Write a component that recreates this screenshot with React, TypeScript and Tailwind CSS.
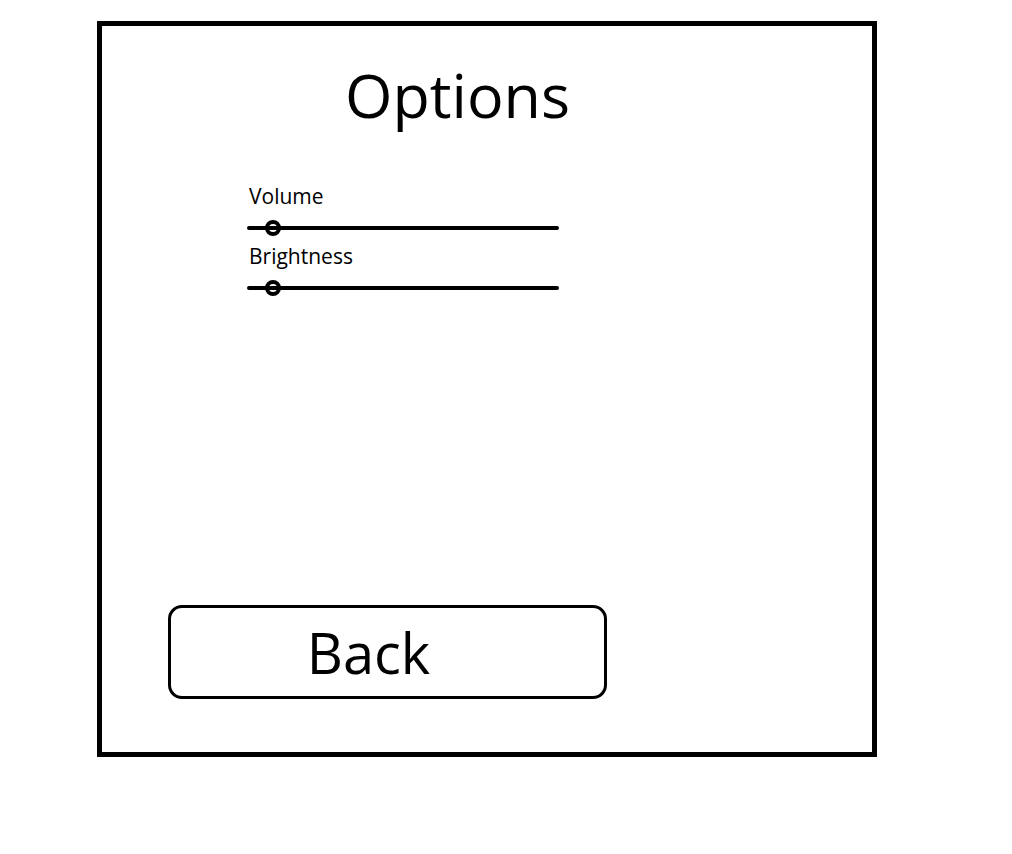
import React from "react";

function Slider({ label }: { label: string }) {
  return (
    <div className="flex flex-col">
      <span className="text-[21px] leading-[28px] text-black pl-[2px]">{label}</span>
      <div className="relative mt-[10px] w-[312px] h-[16px] flex items-center">
        <div className="w-full h-[4px] bg-black rounded-full" />
        <div className="absolute left-[18px] top-0 w-[16px] h-[16px] rounded-full border-[4px] border-black" />
      </div>
    </div>
  );
}

export default function App() {
  return (
    <div
      className="w-[1012px] h-[854px] bg-white pt-[21px] pl-[97px]"
      style={{ fontFamily: '"Open Sans", sans-serif' }}
    >
      <div className="w-[780px] h-[736px] border-[5px] border-black flex flex-col">
        <h1 className="ml-[243px] mt-[34px] text-[61px] leading-[70px] text-black">
          Options
        </h1>
        <div className="ml-[145px] mt-[52px] flex flex-col gap-[6px]">
          <Slider label="Volume" />
          <Slider label="Brightness" />
        </div>
        <button
          type="button"
          className="ml-[66px] mt-auto mb-[53px] w-[439px] h-[94px] border-[3px] border-black rounded-[14px] flex items-center justify-center pr-[38px] text-[56px] text-black"
        >
          Back
        </button>
      </div>
    </div>
  );
}
